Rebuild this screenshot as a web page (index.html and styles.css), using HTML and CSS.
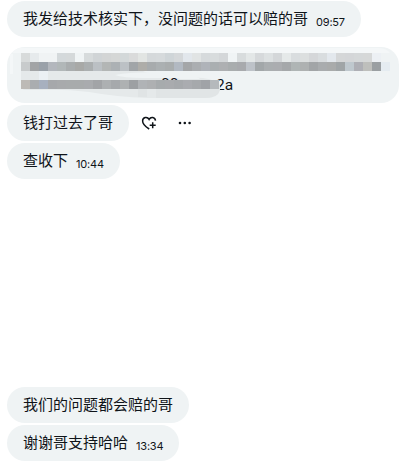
FILE: index.html
```html
<!DOCTYPE html>
<html lang="zh-CN">
<head>
    <meta charset="UTF-8">
    <meta name="viewport" content="width=device-width, initial-scale=1.0">
    <title>Messages</title>
    <link rel="stylesheet" href="styles.css">
</head>
<body>

    <div class="chat">
        <div class="row">
            <div class="bubble">我发给技术核实下，没问题的话可以赔的哥<span class="time">09:57</span></div>
        </div>

        <div class="row address">
            <div class="bubble masked">
                <!-- Smudges go under the text, mosaic over it -->
                <svg class="mosaic" width="392" height="56" viewBox="7 47 392 56">
                    <path d="M18 48h360q8 0 12 5H12q2-4 6-5zM10 54h3v20h-3z" fill="#f4f7f8"/>
                    <path d="M21 71h122q8 5 60 7 15 2 17 9 0 9-14 11h-59q-30-1-58-6-25-3-48-2h-15q-5 0-5-4z" fill="#e5e9ea"/>
                    <path d="M39 71h9v9h-9z" fill="#ebf0f4"/>
                    <path d="M115 75q20-4 60-2 22 2 25 6h-20l-2-1h-35q-20 0-28-3z" fill="#eff3f4"/>
                    <path d="M138 89h9v8h-9zM156 89h9v9h-9zM183 89h9v9h-9z" fill="#e0e4e5"/>
                </svg>
                <span class="part">00</span>
                <span class="tail">2a</span>
                <svg class="mosaic" width="392" height="56" viewBox="7 47 392 56">
                    <path d="M160 80h56q5 4 4 10-2 8-14 8h-46z" fill="#e1e5e6"/>
                    <g id="cells" shape-rendering="crispEdges"></g>
                </svg>
            </div>
        </div>

        <!-- Message with its action icons -->
        <div class="row">
            <div class="bubble">钱打过去了哥</div>
            <div class="actions">
                <svg class="icon" width="16" height="16" viewBox="0 0 16 16">
                    <path d="M8.2 14C4 11.4 1.6 8.8 1.6 6c0-3.8 4.7-4.8 6.5-1.6C9.8 1.4 14 2 14.5 5.7" fill="none" stroke="#0f1419" stroke-width="1.5"/>
                    <path d="M11.7 7.2v6M8.7 10.2h6" fill="none" stroke="#0f1419" stroke-width="1.5"/>
                </svg>
                <svg class="icon" width="16" height="16" viewBox="0 0 16 16" fill="#0f1419">
                    <circle cx="3" cy="8" r="1.3"/>
                    <circle cx="7.8" cy="8" r="1.3"/>
                    <circle cx="12.6" cy="8" r="1.3"/>
                </svg>
            </div>
        </div>

        <div class="row">
            <div class="bubble">查收下<span class="time">10:44</span></div>
        </div>

        <div class="row later">
            <div class="bubble">我们的问题都会赔的哥</div>
        </div>

        <div class="row">
            <div class="bubble">谢谢哥支持哈哈<span class="time">13:34</span></div>
        </div>
    </div>

    <script>
        // One list of colours per mosaic line, 9px cells
        const lines = [
            { y: 53, colors: "d8dbdb e6eaec f0f3f4 f0f3f4 d4d9db d5d9da f0f4f5 d7dbdc d0d4d6 d3d5d5 d5d7d6 d3d8d9 dadbdb e2e5e3 d5d9db d6dadc cfd5d8 d5d8da e2e7ec e1e4e4 d6dadc d8dcdd d4d7d9 f0f4f5 d8dcdd e3e7e7 d6d9db dde1e2 d4d7d9 e5e9e9 d9dddf dcdfdf d5d7d9 d9dddf e3e8ed d5d7d8 d4d6d8 d5d8d9 d6d8d8 ecf0f4" },
            { y: 62, colors: "c8cbcc a2a4a6 9aa1a9 b3b7bd b1b7b8 a9adae a8a9a7 abafb0 bbc0c4 b3b6b5 acb1b4 bcc1c5 a1a5a8 aeada9 a7abad abb0b2 a9adae b2b9c2 a4a6a8 abaeb1 afb3b9 aaafb1 aeb0b2 a9adae a8aaad bdc2c8 a2a7a9 aaaeb0 abadb0 a5a8aa afb5b5 aeb1b1 a2a5a7 a9acae a9abab a0a5a7 bfc8ce aeafb5 bebfbc 9a9fa2 e5ecf1" },
            { y: 80, colors: "bdbab6 aaadb0 a7b0bf a6a8ab a8aaac a8abac a8abac a9abae a2a4a7 adb0b2 a6a9ac aeb1b2 9da0a3 b0b3b6 aeb0b2 a7abad a9abae a6a9ac aaacb0 a6a9ac a0a3a7 b5b9bc" }
        ];
        let cells = "";
        lines.forEach(line => {
            line.colors.split(" ").forEach((color, i) => {
                cells += `<rect x="${21 + i * 9}" y="${line.y}" width="9" height="9" fill="#${color}"/>`;
            });
        });
        document.getElementById("cells").innerHTML = cells;
    </script>

</body>
</html>
```
FILE: styles.css
```css
body {
    margin: 0;
    background-color: #fff;
    color: #0f1419;
    font-family: "Noto Sans CJK SC", sans-serif;
    font-size: 15px;
    line-height: 20px;
}
.chat {
    display: flex;
    flex-direction: column;
    gap: 2px;
    padding: 1px 4px 5px 7px;
}
.row {
    display: flex;
    align-items: center;
}
.bubble {
    box-sizing: border-box;
    height: 36px;
    padding: 7px 16px 9px;
    border-radius: 18px;
    background-color: #eff3f4;
    white-space: nowrap;
}
.time {
    display: inline-block;
    margin-left: 8px;
    font-family: Inter, sans-serif;
    font-size: 11px;
    letter-spacing: -0.2px;
    line-height: 12px;
    vertical-align: -2px;
}
.address {
    margin-top: 8px;
}
.masked {
    position: relative;
    display: flex;
    align-items: flex-end;
    width: 392px;
    height: 56px;
    padding-bottom: 8px;
    font-family: Roboto, sans-serif;
    font-size: 15.5px;
}
.part,
.tail {
    position: relative;
}
.part {
    width: 55px;
    margin-left: 138px;
    padding-bottom: 1px;
}
.mosaic {
    position: absolute;
    top: 0;
    left: 0;
    border-radius: 18px;
}
.actions {
    display: flex;
    gap: 20px;
    margin-left: 12px;
}
.icon {
    display: block;
}
.later {
    margin-top: 206px;
}
```
